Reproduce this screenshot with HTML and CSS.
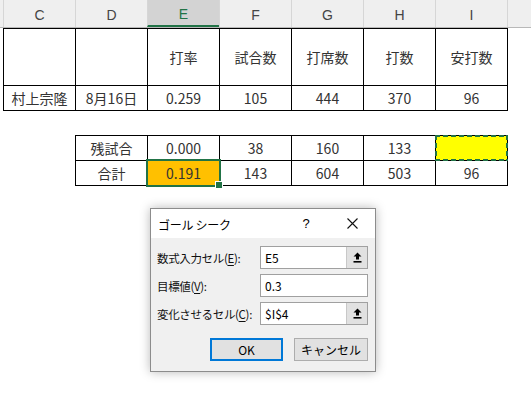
FILE: index.html
```html
<!DOCTYPE html>
<html lang="ja">
<head>
<meta charset="utf-8">
<link rel="stylesheet" href="styles.css">
</head>
<body>
<div class="sheet">
  <div class="colheads">
    <div class="ch">C</div>
    <div class="ch">D</div>
    <div class="ch sel">E</div>
    <div class="ch">F</div>
    <div class="ch">G</div>
    <div class="ch">H</div>
    <div class="ch">I</div>
    <div class="ch rest"></div>
  </div>

  <div class="grid t1">
    <div class="c tall"></div>
    <div class="c tall"></div>
    <div class="c tall">打率</div>
    <div class="c tall">試合数</div>
    <div class="c tall">打席数</div>
    <div class="c tall">打数</div>
    <div class="c tall">安打数</div>
    <div class="c">村上宗隆</div>
    <div class="c">8月16日</div>
    <div class="c">0.259</div>
    <div class="c">105</div>
    <div class="c">444</div>
    <div class="c">370</div>
    <div class="c">96</div>
  </div>

  <div class="grid t2">
    <div class="c">残試合</div>
    <div class="c">0.000</div>
    <div class="c">38</div>
    <div class="c">160</div>
    <div class="c">133</div>
    <div class="c target"></div>
    <div class="c">合計</div>
    <div class="c active">0.191</div>
    <div class="c">143</div>
    <div class="c">604</div>
    <div class="c">503</div>
    <div class="c">96</div>
  </div>

  <div class="dialog">
    <div class="titlebar">
      <span class="title">ゴール シーク</span>
      <span class="tbtn">?</span>
      <span class="tbtn"><svg width="11" height="11" viewBox="0 0 11 11"><path d="M0.5 0.5 L10.5 10.5 M10.5 0.5 L0.5 10.5" stroke="#111" stroke-width="1.1" fill="none"/></svg></span>
    </div>
    <div class="dbody">
      <div class="form">
        <label>数式入力セル(<u>E</u>):</label>
        <div class="inp"><span>E5</span><span class="pick"><svg width="9" height="11" viewBox="0 0 9 11"><path d="M4.5 0.5 L8.5 4.5 H6 V7.5 H3 V4.5 H0.5 Z" fill="#000"/><rect x="0.5" y="9" width="8" height="1.6" fill="#000"/></svg></span></div>
        <label>目標値(<u>V</u>):</label>
        <div class="inp"><span>0.3</span></div>
        <label>変化させるセル(<u>C</u>):</label>
        <div class="inp"><span>$I$4</span><span class="pick"><svg width="9" height="11" viewBox="0 0 9 11"><path d="M4.5 0.5 L8.5 4.5 H6 V7.5 H3 V4.5 H0.5 Z" fill="#000"/><rect x="0.5" y="9" width="8" height="1.6" fill="#000"/></svg></span></div>
      </div>
      <div class="buttons">
        <button class="btn ok">OK</button>
        <button class="btn">キャンセル</button>
      </div>
    </div>
  </div>
</div>
</body>
</html>
```

FILE: styles.css
```css
* { box-sizing: border-box; }
html, body { margin: 0; padding: 0; background: #fff; }
body {
  width: 531px;
  height: 395px;
  overflow: hidden;
  font-family: "Noto Sans CJK JP", "Noto Sans", sans-serif;
  color: #222;
}
.sheet { position: relative; width: 531px; height: 395px; }

.colheads {
  display: grid;
  grid-template-columns: repeat(7, 72px) 1fr;
  height: 28px;
  padding-left: 3px;
  background: #efefef;
  border-bottom: 1px solid #b8b8b8;
}
.ch {
  border-left: 1px solid #d6d6d6;
  display: flex;
  align-items: center;
  justify-content: center;
  font-family: "Liberation Sans", "Noto Sans", sans-serif;
  font-size: 14px;
  color: #444;
  padding-top: 2px;
}
.ch.sel {
  background: #d3d3d3;
  color: #217346;
  border-bottom: 2px solid #217346;
  padding-top: 3px;
}

.grid {
  display: grid;
  border-left: 1px solid #000;
  border-top: 1px solid #000;
}
.t1 {
  margin-left: 3px;
  width: 505px;
  grid-template-columns: repeat(7, 72px);
  grid-template-rows: 57px 25px;
}
.t2 {
  margin-left: 75px;
  margin-top: 24px;
  width: 433px;
  grid-template-columns: repeat(6, 72px);
  grid-template-rows: 25px 25px;
}
.c {
  position: relative;
  border-right: 1px solid #000;
  border-bottom: 1px solid #000;
  display: flex;
  align-items: center;
  justify-content: center;
  font-size: 14px;
  color: #333;
  white-space: nowrap;
}
.c.active { background: #ffc000; }
.c.active::after {
  content: "";
  position: absolute;
  top: -2px; left: -2px; right: -2px; bottom: -2px;
  border: 2px solid #217346;
}
.c.active::before {
  content: "";
  position: absolute;
  right: -4px; bottom: -4px;
  width: 6px; height: 6px;
  background: #217346;
  border: 1px solid #fff;
  z-index: 2;
}
.c.target { background: #ffff00; }
.c.target::after {
  content: "";
  position: absolute;
  top: -1px; left: -1px; right: -1px; bottom: -1px;
  background:
    repeating-linear-gradient(90deg, #217346 0 5px, transparent 5px 8px) top left / 100% 2px no-repeat,
    repeating-linear-gradient(90deg, #217346 0 5px, transparent 5px 8px) bottom left / 100% 2px no-repeat,
    repeating-linear-gradient(180deg, #217346 0 5px, transparent 5px 8px) top left / 2px 100% no-repeat,
    repeating-linear-gradient(180deg, #217346 0 5px, transparent 5px 8px) top right / 2px 100% no-repeat;
}

.dialog {
  position: absolute;
  left: 150px;
  top: 208px;
  width: 226px;
  height: 164px;
  background: #f0f0f0;
  border: 1px solid #8c8c8c;
  box-shadow: 0 0 10px rgba(0,0,0,0.28);
  font-size: 12px;
  color: #000;
}
.titlebar {
  height: 29px;
  background: #fff;
  display: flex;
  align-items: center;
  padding-left: 7px;
}
.title { flex: 1; padding-top: 1px; letter-spacing: -0.3px; }
.tbtn {
  width: 46px;
  height: 29px;
  display: flex;
  align-items: center;
  justify-content: center;
  font-family: "Liberation Sans", sans-serif;
  font-size: 13px;
}
.dbody { padding: 8px 7px 9px 6px; }
.form {
  display: grid;
  grid-template-columns: 103px 108px;
  grid-auto-rows: 23px;
  row-gap: 5px;
  align-items: center;
}
.form label {
  white-space: nowrap;
  font-size: 11.5px;
  letter-spacing: -0.35px;
  color: #111;
}
.form u { text-decoration-thickness: 1px; text-underline-offset: 2px; }
.inp {
  height: 23px;
  background: #fff;
  border: 1px solid #a0a0a0;
  display: flex;
  align-items: center;
  padding-left: 4px;
}
.inp span:first-child { flex: 1; }
.pick {
  width: 21px;
  height: 21px;
  background: #e1e1e1;
  border-left: 1px solid #c8c8c8;
  display: flex;
  align-items: center;
  justify-content: center;
}
.buttons {
  display: flex;
  justify-content: flex-end;
  gap: 11px;
  margin-top: 13px;
}
.btn {
  width: 74px;
  height: 23px;
  background: #e1e1e1;
  border: 1px solid #adadad;
  font-family: "Noto Sans CJK JP", "Noto Sans", sans-serif;
  font-size: 12px;
  color: #000;
  padding: 0;
}
.btn.ok { width: 73px; border: 2px solid #0078d7; }
```
